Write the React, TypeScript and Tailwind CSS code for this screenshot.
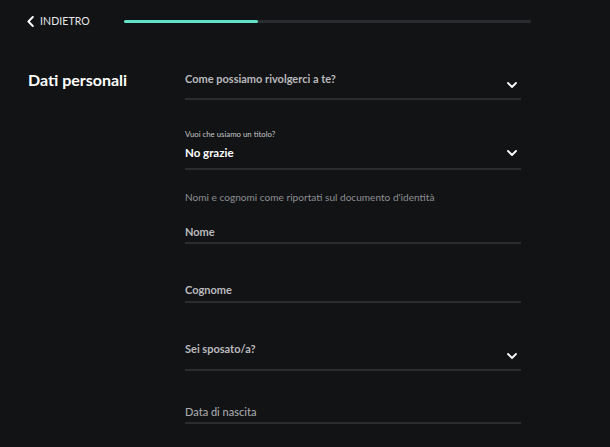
import React from "react";

const Chevron = ({ className = "" }: { className?: string }) => (
  <svg width="10" height="6" viewBox="0 0 10 6" className={className} fill="none">
    <path d="M1 1l4 4 4-4" stroke="#ffffff" strokeWidth="1.8" strokeLinecap="round" strokeLinejoin="round" />
  </svg>
);

export default function App() {
  return (
    <div className="min-h-[447px] w-full bg-[#121315] font-['Lato',sans-serif] text-white">
      {/* header */}
      <div className="flex h-[42px] items-center">
        <div className="ml-[27px] flex w-[97px] items-center">
          <svg width="7" height="11" viewBox="0 0 7 11" fill="none" className="mt-[1px]">
            <path d="M5.8 1L1.4 5.5l4.4 4.5" stroke="#ffffff" strokeWidth="1.9" strokeLinecap="round" strokeLinejoin="round" />
          </svg>
          <span className="ml-[6px] text-[10.5px] leading-[14px] tracking-[0.1px] text-[#e6e7e9]">INDIETRO</span>
        </div>
        <div className="h-[3px] w-[407px] rounded-full bg-[#2b2c2f]">
          <div className="h-[3px] w-[134px] rounded-full bg-[#5fe2c8]" />
        </div>
      </div>

      {/* main */}
      <div className="flex pl-[28px] pt-[28px]">
        <div className="w-[157px]">
          <h1 className="text-[16px] font-bold leading-[20px] text-white">Dati personali</h1>
        </div>
        <div className="w-[336px]">
          {/* field 1 */}
          <div className="mt-[2px] flex h-[28px] items-start justify-between border-b-2 border-[#2b2c2f]">
            <div className="text-[11px] font-bold leading-[14px] text-[#b9babd]">Come possiamo rivolgerci a te?</div>
            <Chevron className="mr-[4px] mt-[10px]" />
          </div>

          {/* field 2 */}
          <div className="mt-[29px] h-[41px] border-b-2 border-[#2b2c2f]">
            <div className="text-[7.8px] leading-[10px] text-[#c4c5c8]">Vuoi che usiamo un titolo?</div>
            <div className="mt-[7px] flex items-center justify-between">
              <div className="text-[11.5px] font-bold leading-[14px] text-white">No grazie</div>
              <Chevron className="mr-[4px]" />
            </div>
          </div>

          <div className="mt-[20px] text-[10.1px] leading-[14px] text-[#8d8f93]">
            Nomi e cognomi come riportati sul documento d'identità
          </div>

          <div className="mt-[21px] h-[19px] border-b-2 border-[#2b2c2f]">
            <div className="text-[11px] font-bold leading-[14px] text-[#b9babd]">Nome</div>
          </div>

          <div className="mt-[39px] h-[20px] border-b-2 border-[#2b2c2f]">
            <div className="text-[11px] font-bold leading-[14px] text-[#b9babd]">Cognome</div>
          </div>

          <div className="mt-[39px] flex h-[29px] items-start justify-between border-b-2 border-[#2b2c2f]">
            <div className="text-[11px] font-bold leading-[14px] text-[#b9babd]">Sei sposato/a?</div>
            <Chevron className="mr-[4px] mt-[11px]" />
          </div>

          <div className="mt-[34px] h-[19px] border-b-2 border-[#2b2c2f]">
            <div className="text-[11px] font-medium leading-[14px] text-[#a6a8ab]">Data di nascita</div>
          </div>
        </div>
      </div>
    </div>
  );
}
